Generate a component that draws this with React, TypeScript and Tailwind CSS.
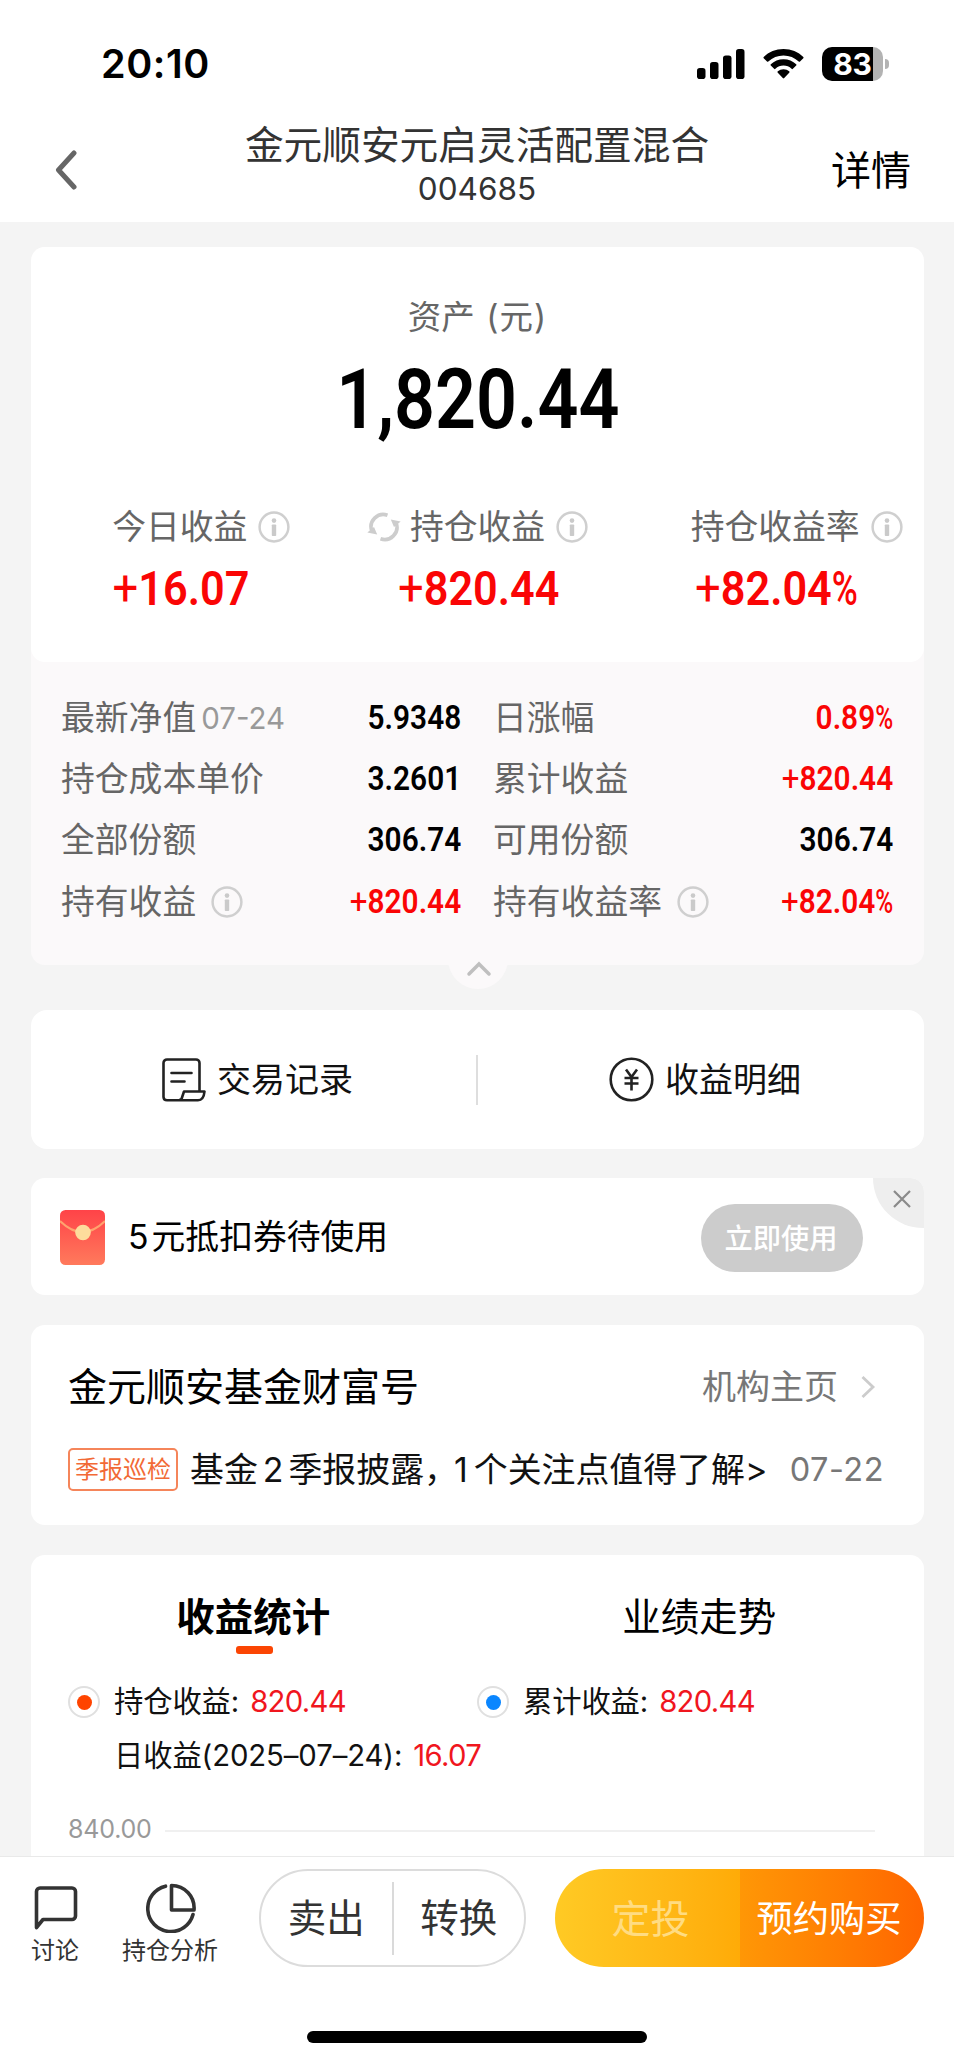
import type { ReactNode } from "react";
import { clsx } from "clsx";

type Stat = {
  label: string;
  value: string;
  refresh?: boolean;
};

type Detail = {
  label: string;
  date?: string;
  info?: boolean;
  value: string;
  red?: boolean;
};

const stats: Stat[] = [
  { label: "今日收益", value: "+16.07" },
  { label: "持仓收益", value: "+820.44", refresh: true },
  { label: "持仓收益率", value: "+82.04%" },
];

const leftDetails: Detail[] = [
  { label: "最新净值", date: "07-24", value: "5.9348" },
  { label: "持仓成本单价", value: "3.2601" },
  { label: "全部份额", value: "306.74" },
  { label: "持有收益", info: true, value: "+820.44", red: true },
];

const rightDetails: Detail[] = [
  { label: "日涨幅", value: "0.89%", red: true },
  { label: "累计收益", value: "+820.44", red: true },
  { label: "可用份额", value: "306.74" },
  { label: "持有收益率", info: true, value: "+82.04%", red: true },
];

// Narrow digits: sign and percent are drawn lighter than the figures
function Num({ value, className }: { value: string; className?: string }) {
  const sign = value.startsWith("+");
  const percent = value.endsWith("%");
  const digits = value.replace(/[+%]/g, "");

  return (
    <span
      className={clsx(
        "inline-flex items-baseline whitespace-nowrap font-['Roboto',sans-serif] font-semibold leading-none",
        className,
      )}
    >
      {sign && <span className="text-[1.05em] font-normal leading-none">+</span>}
      <span>{digits}</span>
      {percent && (
        <span className="-mr-[0.13em] inline-block origin-left scale-x-[0.82] font-medium">
          %
        </span>
      )}
    </span>
  );
}

function InfoIcon() {
  return (
    <svg width="32" height="32" viewBox="0 0 32 32" className="shrink-0">
      <circle cx="16" cy="16" r="14.4" fill="none" stroke="#cfcfcf" strokeWidth="2.5" />
      <circle cx="16" cy="9.6" r="2.3" fill="#cacaca" />
      <rect x="13.8" y="13.4" width="4.4" height="11.6" rx="0.8" fill="#cacaca" />
    </svg>
  );
}

function RefreshIcon() {
  return (
    <svg width="34" height="30" viewBox="0 0 34 30" className="shrink-0">
      <g fill="none" stroke="#cdcdcd" strokeWidth="3.6">
        <path d="M4.8 19A12.300 12.300 0 0 1 20.500 3.200" />
        <path d="M29.200 11A12.300 12.300 0 0 1 13.500 26.800" />
      </g>
      <path d="M0.300 20.400 7 15 10.200 22.400Z" fill="#cdcdcd" />
      <path d="M33.700 9.600 27 15 23.800 7.600Z" fill="#cdcdcd" />
    </svg>
  );
}

function StatusBar() {
  return (
    <div className="flex h-[126px] items-start justify-between pl-[101px] pr-[65px] pt-[46px]">
      <span className="text-[39.500px] font-semibold leading-[36px] tracking-[0.600px]">
        20:10
      </span>
      <div className="flex h-[35px] items-center">
        <svg width="48" height="30" viewBox="0 0 48 30">
          <rect x="0" y="19" width="8.500" height="11" rx="2.800" />
          <rect x="13" y="13" width="8.500" height="17" rx="2.800" />
          <rect x="26" y="6.500" width="8.500" height="23.500" rx="2.800" />
          <rect x="39" y="0" width="8.500" height="30" rx="2.800" />
        </svg>
        <svg width="41" height="30" viewBox="0 0 41 30" className="ml-[18px]">
          <path d="M20.5 0C28.2 0 35.2 3 40.3 7.9a.9.9 0 0 1 0 1.3L37 12.5a.9.9 0 0 1-1.300 0A22 22 0 0 0 20.500 6.400 22 22 0 0 0 5.300 12.500a.9.9 0 0 1-1.300 0L.7 9.200a.9.9 0 0 1 0-1.300C5.800 3 12.800 0 20.500 0Z" />
          <path d="M20.500 10.200c4.900 0 9.400 1.900 12.700 5a.9.9 0 0 1 0 1.300l-3.300 3.300a.9.9 0 0 1-1.300 0 11.800 11.800 0 0 0-16.200 0 .9.9 0 0 1-1.300 0l-3.300-3.300a.9.9 0 0 1 0-1.300c3.300-3.100 7.800-5 12.700-5Z" />
          <path d="M20.500 20.200c2.200 0 4.200.8 5.700 2.100a.9.9 0 0 1 0 1.400l-5 5.300a.9.9 0 0 1-1.400 0l-5-5.300a.9.9 0 0 1 0-1.400 8.700 8.700 0 0 1 5.700-2.100Z" />
        </svg>
        <div className="ml-[18px] flex items-center">
          <div className="flex h-[34px] w-[61px] items-center justify-center rounded-[10px] bg-[linear-gradient(to_right,#000_51px,#b3b3b3_51px)]">
            <span className="text-[30px] font-bold leading-none tracking-[-0.300px] text-white">
              83
            </span>
          </div>
          <div className="ml-[2px] h-[10px] w-[4px] rounded-r-full bg-[#b3b3b3]" />
        </div>
      </div>
    </div>
  );
}

function NavBar() {
  return (
    <div className="flex h-[96px] items-start pl-[54px]">
      <svg width="40" height="40" viewBox="0 0 40 40" className="mt-[24px]">
        <path
          d="M20 3 4.500 20 20 37"
          fill="none"
          stroke="#666"
          strokeWidth="5"
          strokeLinecap="round"
          strokeLinejoin="round"
        />
      </svg>
      <div className="ml-[151px] flex w-[464px] flex-col items-center text-[#333]">
        <h1 className="whitespace-nowrap text-[38.700px] leading-[38px]">
          金元顺安元启灵活配置混合
        </h1>
        <span className="mt-[6px] text-[31.500px] leading-[38px]">004685</span>
      </div>
      <span className="ml-[122px] mt-[25px] text-[40px] leading-[40px]">详情</span>
    </div>
  );
}

function StatCell({ label, value, refresh }: Stat) {
  return (
    <div className="flex flex-1 flex-col items-center">
      <div className="flex items-center">
        <div className="w-[43px]">{refresh && <RefreshIcon />}</div>
        <span className="text-[33.800px] leading-[40px] text-[#666]">{label}</span>
        <div className="flex w-[43px] justify-end">
          <InfoIcon />
        </div>
      </div>
      <Num
        value={value}
        className="ml-[2px] mt-[16px] h-[52px] scale-x-[0.900] text-[48px] text-[#fa0505]"
      />
    </div>
  );
}

function DetailColumn({ items }: { items: Detail[] }) {
  return (
    <div className="flex flex-col">
      {items.map((item) => (
        <div key={item.label} className="flex h-[61.300px] items-center">
          <span className="text-[33.800px] leading-[40px] text-[#666]">{item.label}</span>
          {item.date && (
            <span className="ml-[5px] text-[29.500px] leading-[40px] text-[#999]">
              {item.date}
            </span>
          )}
          {item.info && (
            <span className="ml-[15px]">
              <InfoIcon />
            </span>
          )}
          <Num
            value={item.value}
            className={clsx(
              "ml-auto origin-right scale-x-[0.890] text-[33.500px]",
              item.red ? "text-[#fa0505]" : "text-black",
            )}
          />
        </div>
      ))}
    </div>
  );
}

function AssetCard() {
  return (
    <section className="relative h-[718px] rounded-[14px] bg-[#fbf9fa]">
      <div className="flex h-[415px] flex-col items-center rounded-[14px] bg-white pt-[50px]">
        <span className="text-[33.500px] leading-[40px] text-[#666]">
          资产<span className="ml-[1px] tracking-[1px]"> (元)</span>
        </span>
        <Num value="1,820.44" className="mt-[22px] scale-x-[0.870] text-[82.500px]" />
        <div className="mt-[65px] flex w-full">
          {stats.map((s) => (
            <StatCell key={s.label} {...s} />
          ))}
        </div>
      </div>
      <div className="grid grid-cols-[400px_400px] gap-x-[32px] pl-[30px] pt-[25px]">
        <DetailColumn items={leftDetails} />
        <DetailColumn items={rightDetails} />
      </div>
      <div className="absolute -bottom-[24px] left-[417px] flex h-[60px] w-[60px] items-center justify-center rounded-full bg-[#fbf9fa]">
        <svg width="26" height="16" viewBox="0 0 26 16" className="ml-[1px] mt-[19px]">
          <path
            d="M3 13 13 3 23 13"
            fill="none"
            stroke="#bfbfbf"
            strokeWidth="3.500"
            strokeLinecap="round"
          />
        </svg>
      </div>
    </section>
  );
}

function ShortcutCard() {
  return (
    <section className="mt-[45px] flex h-[139px] items-center rounded-[16px] bg-white text-[34px] leading-[40px] text-[#111]">
      <div className="flex w-[445px] items-center pl-[131px]">
        <svg width="44" height="44" viewBox="0 0 44 44" fill="none" stroke="#222" strokeWidth="2.600">
          <path
            d="M37.500 33V5a3.500 3.500 0 0 0-3.500-3.500H5A3.500 3.500 0 0 0 1.500 5v34A3.500 3.500 0 0 0 5 42.300h31c3.500 0 6-3.500 6.500-8.800H22l-2.500 7.500-2.500 1.300"
            strokeLinejoin="round"
          />
          <path d="M9.500 15h20M9.500 23.500h13" strokeLinecap="round" />
        </svg>
        <span className="ml-[11px] mt-[1px]">交易记录</span>
      </div>
      <div className="h-[50px] w-[2px] bg-[#dedede]" />
      <div className="flex flex-1 items-center pl-[131px]">
        <svg width="45" height="45" viewBox="0 0 45 45" fill="none" stroke="#222" strokeWidth="2.600">
          <circle cx="22.500" cy="22.500" r="20.800" />
          <path d="M17 12.500 22.500 20 28 12.500M22.500 20v13.500M15.500 21h14M15.500 26.500h14" />
        </svg>
        <span className="ml-[11px] mt-[1px]">收益明细</span>
      </div>
    </section>
  );
}

function CouponCard() {
  return (
    <section className="relative mt-[29px] flex h-[117px] items-center overflow-hidden rounded-[14px] bg-white pl-[29px] pr-[61px]">
      <svg width="45" height="55" viewBox="0 0 45 55" className="mt-[2px]">
        <defs>
          <linearGradient id="envelope" x1="0" y1="0" x2="0" y2="1">
            <stop offset="0" stopColor="#ff4348" />
            <stop offset="1" stopColor="#ff7a5c" />
          </linearGradient>
        </defs>
        <rect width="45" height="55" rx="5.500" fill="url(#envelope)" />
        <path d="M0 11Q22.500 33 45 11" fill="none" stroke="#ffa36e" strokeWidth="2" />
        <circle cx="23" cy="22.500" r="7.800" fill="#fddc9c" />
      </svg>
      <span className="ml-[23px] text-[33.800px] leading-[40px]">
        <span className="mr-[3px]">5</span>元抵扣券待使用
      </span>
      <button className="ml-auto mt-[2px] h-[68px] w-[162px] rounded-full bg-[#ccc] pr-[2px] pt-[4px] text-[28.300px] font-medium leading-none text-white">
        立即使用
      </button>
      <div className="absolute right-0 top-0 flex h-[50px] w-[51px] items-center justify-center rounded-bl-[50px] bg-[#eee]">
        <svg width="20" height="20" viewBox="0 0 20 20" className="-mt-[8px] ml-[6px]">
          <path d="M2 2 18 18M18 2 2 18" stroke="#8a8a8a" strokeWidth="2.200" />
        </svg>
      </div>
    </section>
  );
}

function FundAccountCard() {
  return (
    <section className="mt-[30px] h-[200px] rounded-[14px] bg-white pl-[37px] pr-[40px] pt-[42px]">
      <div className="flex h-[40px] items-center">
        <h2 className="text-[39px] leading-[40px]">金元顺安基金财富号</h2>
        <span className="ml-auto text-[34px] leading-[40px] text-[#777]">机构主页</span>
        <svg width="16" height="24" viewBox="0 0 16 24" className="ml-[22px] mr-[8px]">
          <path d="M2.500 2 13 12 2.500 22" fill="none" stroke="#ccc" strokeWidth="2.800" />
        </svg>
      </div>
      <div className="mt-[41px] flex h-[43px] items-center">
        <span className="flex h-[43px] w-[110px] items-center justify-center rounded-[5px] border-2 border-[#f5855a] text-[24px] leading-none text-[#f26a36]">
          季报巡检
        </span>
        <span className="ml-[12px] whitespace-nowrap text-[33.900px] leading-[40px] text-[#111]">
          基金<span className="ml-[5px] mr-[5px]">2</span>季报披露
          <span className="tracking-[-4px]">，</span>
          <span className="mr-[6px]">1</span>个关注点值得了解&gt;
        </span>
        <span className="ml-auto text-[32.500px] leading-[40px] tracking-[0.500px] text-[#777]">
          07-22
        </span>
      </div>
    </section>
  );
}

function Legend({ dot, children, value }: { dot?: string; children: ReactNode; value: string }) {
  return (
    <div className="flex items-center text-[29.300px] leading-[32px] text-[#111]">
      {dot ? (
        <span className="flex h-[32px] w-[32px] items-center justify-center rounded-full border-2 border-[#e0e0e0]">
          <span className={clsx("h-[15px] w-[15px] rounded-full", dot)} />
        </span>
      ) : (
        <span className="w-[32px]" />
      )}
      <span className="ml-[14px] tracking-[-0.100px]">{children}</span>
      <span className="ml-[11px] tracking-[-0.700px] text-[#f0161e]">{value}</span>
    </div>
  );
}

function ChartCard() {
  return (
    <section className="mt-[30px] flex-1 rounded-t-[14px] bg-white pt-[42px]">
      <div className="flex text-[38.500px] leading-[40px]">
        <div className="flex flex-1 flex-col items-center">
          <span className="mr-[1px] font-bold">收益统计</span>
          <div className="ml-[2px] mt-[9px] h-[8px] w-[37px] rounded-[3px] bg-[#fb4503]" />
        </div>
        <div className="flex flex-1 justify-center pr-[2px]">业绩走势</div>
      </div>
      <div className="mt-[32px] grid grid-cols-[409px_auto] pl-[37px]">
        <Legend dot="bg-[#ff4400]" value="820.44">
          持仓收益:
        </Legend>
        <Legend dot="bg-[#0a86ff]" value="820.44">
          累计收益:
        </Legend>
      </div>
      <div className="mt-[22px] pl-[37px]">
        <Legend value="16.07">日收益(2025–07–24):</Legend>
      </div>
      <div className="mt-[41px] flex items-center pl-[37px] pr-[49px]">
        <span className="w-[97px] text-[25px] leading-[32px] tracking-[-0.200px] text-[#999]">
          840.00
        </span>
        <div className="mt-[3px] h-[2px] flex-1 bg-[#f0f0f0]" />
      </div>
    </section>
  );
}

function BottomBar() {
  return (
    <footer className="relative h-[207px] border-t border-[#e9e9e9] bg-white">
      <div className="flex pt-[12px]">
        <div className="flex w-[110px] flex-col items-center pt-[15px] text-[#333]">
          <svg width="46" height="48" viewBox="0 0 46 48" className="ml-[1px]">
            <path
              d="M3.500 43.500V7.500A3.500 3.500 0 0 1 7 4h32A3.500 3.500 0 0 1 42.500 7.500V32A3.500 3.500 0 0 1 39 35.500H10Z"
              fill="none"
              stroke="#333"
              strokeWidth="3.600"
              strokeLinejoin="round"
            />
          </svg>
          <span className="mt-[7px] text-[24px] leading-[24px]">讨论</span>
        </div>
        <div className="flex w-[120px] flex-col items-center pt-[14px] text-[#333]">
          <svg
            width="50"
            height="50"
            viewBox="0 0 50 50"
            fill="none"
            stroke="#333"
            strokeWidth="3.600"
            className="ml-[2px]"
          >
            <path d="M19.500 3.200A23 23 0 1 0 47 31.500" strokeLinecap="round" />
            <path d="M25.500 2.500A22.500 22.500 0 0 1 48 27H25.500Z" strokeLinejoin="round" />
          </svg>
          <span className="mt-[6px] text-[24px] leading-[24px]">持仓分析</span>
        </div>
        <div className="ml-[29px] flex h-[98px] w-[267px] items-center rounded-full border-2 border-[#dcdcdc] text-[38.500px] leading-[40px] text-[#333]">
          <span className="flex-1 text-center">卖出</span>
          <div className="h-[73px] w-[2px] bg-[#dadada]" />
          <span className="flex-1 text-center">转换</span>
        </div>
        <div className="ml-[29px] flex h-[98px] w-[369px] items-center overflow-hidden rounded-full">
          <span className="flex h-full w-[185px] items-center justify-center bg-gradient-to-r from-[#ffca24] to-[#ffab07] text-[39px] text-[#ffdc82]">
            <span className="ml-[6px] mt-[3px]">定投</span>
          </span>
          <span className="flex h-full w-[184px] items-center justify-center bg-gradient-to-r from-[#ff9706] to-[#ff6500] text-[36.300px] text-white">
            <span className="mr-[6px] mt-[2px] whitespace-nowrap">预约购买</span>
          </span>
        </div>
      </div>
      <div className="absolute bottom-[20px] left-[307px] h-[12px] w-[340px] rounded-full bg-black" />
    </footer>
  );
}

export default function App() {
  return (
    <div className="flex h-[2063px] w-[954px] flex-col overflow-hidden bg-[#f4f4f4] font-['Inter','Noto_Sans_CJK_SC',sans-serif] text-black">
      <header className="bg-white">
        <StatusBar />
        <NavBar />
      </header>
      <main className="flex flex-1 flex-col pl-[31px] pr-[30px] pt-[25px]">
        <AssetCard />
        <ShortcutCard />
        <CouponCard />
        <FundAccountCard />
        <ChartCard />
      </main>
      <BottomBar />
    </div>
  );
}
